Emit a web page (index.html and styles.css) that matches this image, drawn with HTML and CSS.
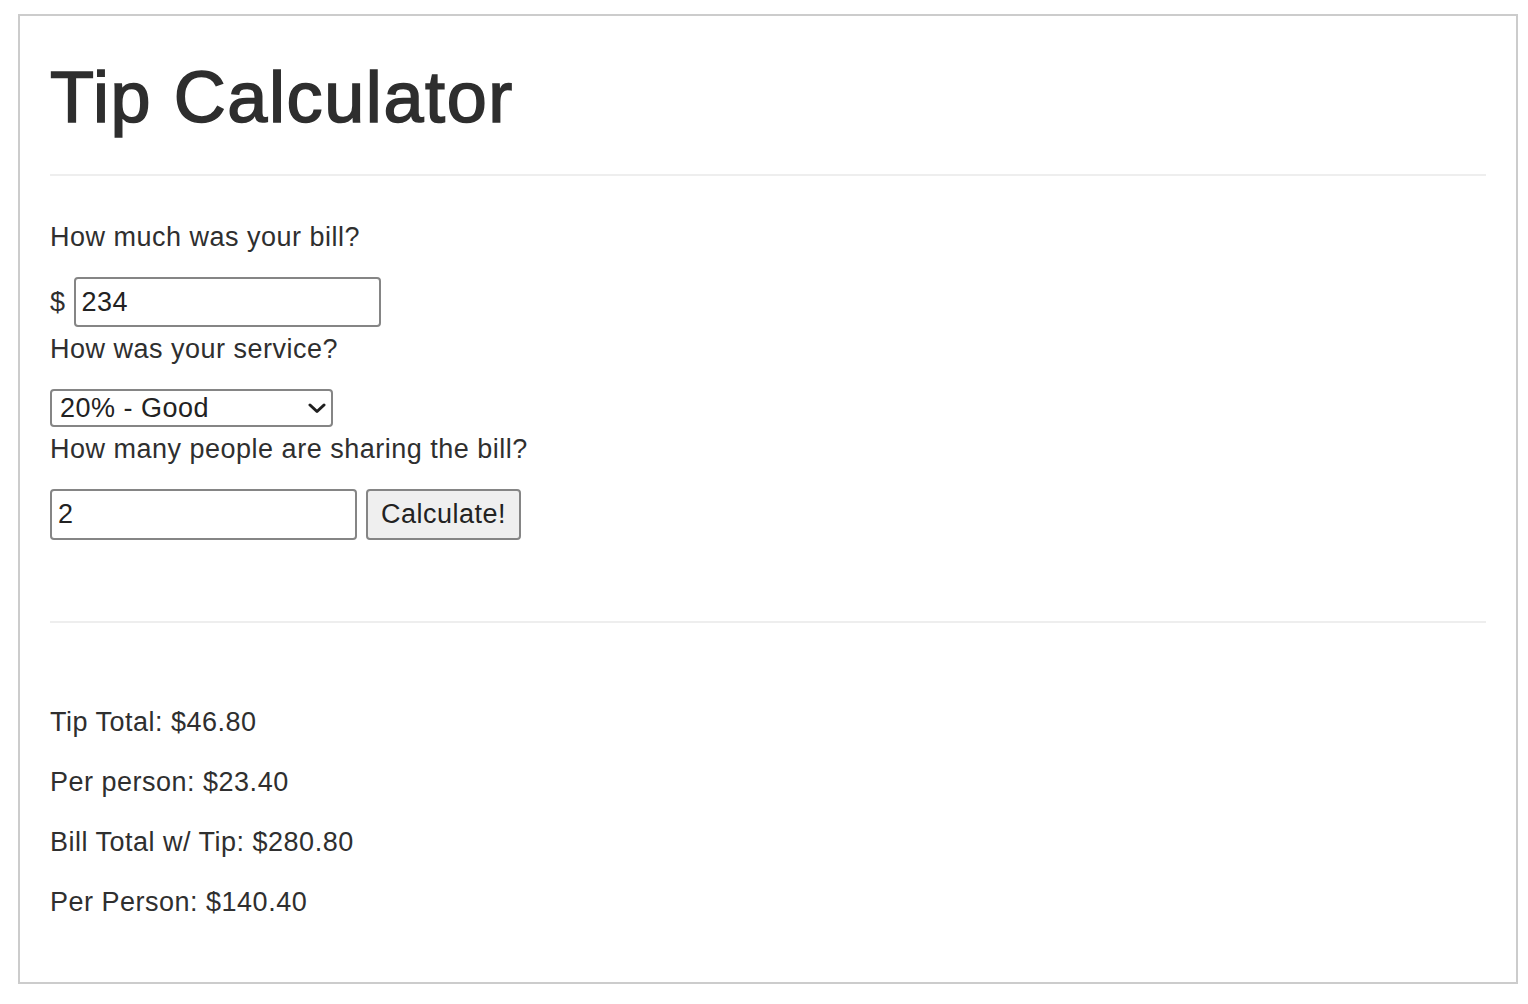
FILE: index.html
```html
<!DOCTYPE html>
<html lang="en">
<head>
<meta charset="utf-8">
<title>Tip Calculator</title>
<link rel="stylesheet" href="styles.css">
</head>
<body>
<div class="panel">
  <h1 class="title">Tip Calculator</h1>
  <hr class="rule">
  <form class="calc">
    <p class="label first">How much was your bill?</p>
    <div class="bill-row">
      <span class="currency">$</span>
      <input class="field bill" type="text" value="234">
    </div>
    <p class="label">How was your service?</p>
    <div class="select-wrap">
      <select class="service">
        <option>30% - Outstanding</option>
        <option selected>20% - Good</option>
        <option>15% - It was OK</option>
        <option>10% - Bad</option>
        <option>5% - Terrible</option>
      </select>
      <svg class="chev" width="18" height="11" viewBox="0 0 18 11"><polyline points="2,2 9,8.5 16,2" fill="none" stroke="#1f1f1f" stroke-width="3" stroke-linecap="round" stroke-linejoin="round"/></svg>
    </div>
    <p class="label">How many people are sharing the bill?</p>
    <div class="people-row">
      <input class="field people" type="text" value="2">
      <button class="btn" type="button">Calculate!</button>
    </div>
  </form>
  <hr class="rule second">
  <div class="results">
    <p class="result first">Tip Total: $46.80</p>
    <p class="result">Per person: $23.40</p>
    <p class="result">Bill Total w/ Tip: $280.80</p>
    <p class="result">Per Person: $140.40</p>
  </div>
</div>
</body>
</html>
```

FILE: styles.css
```css
html, body {
  background: #fff;
}

body {
  margin: 14px 10px 20px 18px;
  font-family: "Liberation Sans", Arial, Helvetica, sans-serif;
  color: #333;
}

.panel {
  border: 2px solid #cccccc;
  padding: 41px 30px 65px 30px;
}

.title {
  margin: 0;
  font-size: 72px;
  line-height: 80px;
  font-weight: 400;
  letter-spacing: 1.6px;
  color: #2e2e2e;
  -webkit-text-stroke: 1.6px #2e2e2e;
}

.rule {
  border: 0;
  height: 2px;
  background: #eeeeee;
  margin: 37px 0 0 0;
}

.rule.second {
  margin-top: 81px;
}

.calc {
  display: flex;
  flex-direction: column;
  align-items: flex-start;
  margin: 0;
}

.label,
.result {
  margin: 7px 0 0 0;
  font-size: 27px;
  line-height: 30px;
  letter-spacing: 0.5px;
  color: #2f2f2f;
}

.label.first {
  margin-top: 46px;
}

.bill-row {
  display: flex;
  align-items: center;
  gap: 8px;
  margin-top: 25px;
}

.currency {
  font-size: 27px;
  line-height: 30px;
  letter-spacing: 0.5px;
  color: #2f2f2f;
}

.field {
  box-sizing: border-box;
  width: 307px;
  height: 50px;
  border: 2px solid #858585;
  border-radius: 4px;
  padding: 0 6px;
  font-family: "Liberation Sans", Arial, Helvetica, sans-serif;
  font-size: 27px;
  letter-spacing: 0.5px;
  color: #222;
  background: #fff;
  outline: none;
}

.select-wrap {
  position: relative;
  width: 283px;
  height: 38px;
  margin-top: 25px;
}

.service {
  appearance: none;
  -webkit-appearance: none;
  box-sizing: border-box;
  width: 100%;
  height: 100%;
  border: 2px solid #858585;
  border-radius: 4px;
  padding: 0 30px 0 8px;
  font-family: "Liberation Sans", Arial, Helvetica, sans-serif;
  font-size: 27px;
  letter-spacing: 0.5px;
  color: #222;
  background: #fff;
  outline: none;
}

.chev {
  position: absolute;
  right: 7px;
  top: 14px;
  pointer-events: none;
}

.people-row {
  display: flex;
  align-items: stretch;
  gap: 9px;
  margin-top: 25px;
}

.field.people {
  height: 51px;
}

.btn {
  box-sizing: border-box;
  width: 155px;
  height: 51px;
  border: 2px solid #858585;
  border-radius: 4px;
  background: #efefef;
  font-family: "Liberation Sans", Arial, Helvetica, sans-serif;
  font-size: 27px;
  letter-spacing: 0.5px;
  color: #222;
  padding: 0;
}

.results {
  display: flex;
  flex-direction: column;
}

.result {
  margin-top: 30px;
}

.result.first {
  margin-top: 84px;
}
```
